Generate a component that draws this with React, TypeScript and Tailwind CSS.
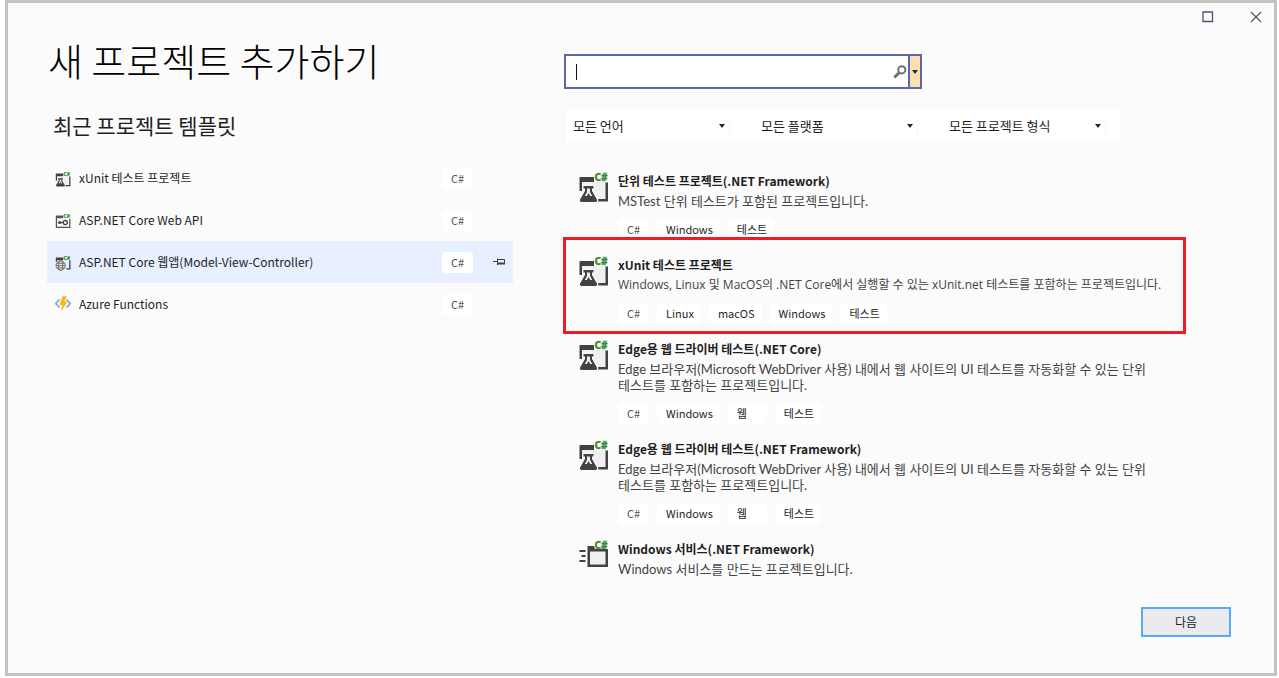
// React
import { Fragment, type ReactNode } from "react"

type Recent = {
  name: string
  icon: ReactNode
  active?: boolean
}

type Template = {
  title: string
  lines: string[]
  tags: string[]
  icon: ReactNode
  marked?: boolean
}

// Icons
function CSharp() {
  return (
    <text x="16.5" y="9" fontSize="10" fontWeight="800" fill="#388a34" stroke="#388a34" strokeWidth="0.3" fontFamily="Noto Sans, sans-serif">
      C#
    </text>
  )
}

function Flask() {
  return (
    <>
      <path
        d="M5.500 14h10v2.500H14V19l4.800 8.200c.9 1.600 0 2.800-1.600 2.800H3.800c-1.600 0-2.500-1.200-1.600-2.800L7 19v-2.500H5.500z"
        fill="#424242"
        stroke="#fbfbfb"
        strokeWidth="2.400"
        paintOrder="stroke"
      />
      <path d="M9 16.500h3v3.500l2.200 4H6.800L9 20z" fill="#f0eff1" />
      <path d="M8.500 24.500h4l-2-3.500z" fill="#424242" />
    </>
  )
}

function TestIcon({ className }: { className: string }) {
  return (
    <svg viewBox="0 -2 31 33" className={className} aria-hidden="true">
      <path d="M4 10h24v17H4z" fill="#f0eff1" />
      <path d="M1.500 5H16v5H4v9H1.500z" fill="#424242" />
      <path d="M27.500 10.500H30v19H19.500V27h8z" fill="#424242" />
      <Flask />
      <CSharp />
    </svg>
  )
}

function ServiceIcon({ className }: { className: string }) {
  return (
    <svg viewBox="0 -2 31 33" className={className} aria-hidden="true">
      <path d="M10 8h19v16H10z" fill="#f0eff1" />
      <path d="M9.500 6H16l1 3h13v18H9.500zM12 11.500v13h15.500v-13z" fill="#424242" fillRule="evenodd" />
      <path d="M1.500 10h6v2h-6zM3.500 15h4v2h-4zM1.500 20h6v2h-6z" fill="#424242" />
      <CSharp />
    </svg>
  )
}

function ApiIcon({ className }: { className: string }) {
  return (
    <svg viewBox="0 -2 31 33" className={className} aria-hidden="true">
      <path d="M1.500 5H16v5H4v16.500h23.500V11H30v18H1.500z" fill="#555" />
      <path d="M9 18.500h10" stroke="#424242" strokeWidth="2.500" />
      <circle cx="9" cy="18.500" r="3" fill="#424242" />
      <circle cx="20" cy="18.500" r="4" fill="#fff" stroke="#424242" strokeWidth="2.500" />
      <CSharp />
    </svg>
  )
}

function WebIcon({ className }: { className: string }) {
  return (
    <svg viewBox="0 -2 31 33" className={className} aria-hidden="true">
      <path d="M1.500 5H16v5H4v3H1.500zM27.500 10H30v18h-8v-2.500h5.500z" fill="#424242" />
      <g fill="#f0eff1" stroke="#666" strokeWidth="1.800">
        <circle cx="11" cy="20.500" r="9" />
        <ellipse cx="11" cy="20.500" rx="4" ry="9" />
        <path d="M2 20.500h18M3.500 16h15M3.500 25h15" />
      </g>
      <CSharp />
    </svg>
  )
}

function FunctionsIcon({ className }: { className: string }) {
  return (
    <svg viewBox="0 0 16 16" className={className} aria-hidden="true">
      <path d="M4.500 3.500.8 7.500l3.700 4M11.500 3.500l3.700 4-3.700 4" fill="none" stroke="#69b3dd" strokeWidth="1.700" />
      <path d="M7.500.3h4.300L9.300 5.500h3.200L6 15.500 7.200 9H4.300z" fill="#fcb813" />
    </svg>
  )
}

function PinIcon() {
  return (
    <svg viewBox="0 0 12 8" className="h-2 w-3" aria-hidden="true">
      <path d="M0 3.500h4M4.500.5v6.500M5 1.500h6.500v4H5" fill="none" stroke="#424242" />
      <path d="M5 4.500h7v2H5z" fill="#424242" />
    </svg>
  )
}

function Caret() {
  return (
    <svg viewBox="0 0 6 4" className="pointer-events-none h-1 w-1.5" aria-hidden="true">
      <path d="M0 0h6L3 4z" fill="#1e2a45" />
    </svg>
  )
}

// Data
const recents: Recent[] = [
  { name: "xUnit 테스트 프로젝트", icon: <TestIcon className="h-[17px] w-4" /> },
  { name: "ASP.NET Core Web API", icon: <ApiIcon className="h-[17px] w-4" /> },
  { name: "ASP.NET Core 웹앱(Model-View-Controller)", icon: <WebIcon className="h-[17px] w-4" />, active: true },
  { name: "Azure Functions", icon: <FunctionsIcon className="size-4" /> },
]

const filters = ["모든 언어", "모든 플랫폼", "모든 프로젝트 형식"]

const edgeLines = [
  "Edge 브라우저(Microsoft WebDriver 사용) 내에서 웹 사이트의 UI 테스트를 자동화할 수 있는 단위",
  "테스트를 포함하는 프로젝트입니다.",
]

const templates: Template[] = [
  {
    title: "단위 테스트 프로젝트(.NET Framework)",
    lines: ["MSTest 단위 테스트가 포함된 프로젝트입니다."],
    tags: ["C#", "Windows", "테스트"],
    icon: <TestIcon className="h-[33px] w-[31px]" />,
  },
  {
    title: "xUnit 테스트 프로젝트",
    lines: ["Windows, Linux 및 MacOS의 .NET Core에서 실행할 수 있는 xUnit.net 테스트를 포함하는 프로젝트입니다."],
    tags: ["C#", "Linux", "macOS", "Windows", "테스트"],
    icon: <TestIcon className="h-[33px] w-[31px]" />,
    marked: true,
  },
  {
    title: "Edge용 웹 드라이버 테스트(.NET Core)",
    lines: edgeLines,
    tags: ["C#", "Windows", "웹", "테스트"],
    icon: <TestIcon className="h-[33px] w-[31px]" />,
  },
  {
    title: "Edge용 웹 드라이버 테스트(.NET Framework)",
    lines: edgeLines,
    tags: ["C#", "Windows", "웹", "테스트"],
    icon: <TestIcon className="h-[33px] w-[31px]" />,
  },
  {
    title: "Windows 서비스(.NET Framework)",
    lines: ["Windows 서비스를 만드는 프로젝트입니다."],
    tags: [],
    icon: <ServiceIcon className="h-[33px] w-[31px]" />,
  },
]

function Tag({ label }: { label: string }) {
  return (
    <span
      className={`flex h-[21px] items-center rounded bg-white pr-[7px] pl-[9px] text-[11px] ${label === "C#" ? "min-w-[31px] text-[#555]" : "min-w-[39px] text-[#1e1e1e]"}`}
    >
      {label}
    </span>
  )
}

function RecentList() {
  return (
    <ul className="mt-[18px] mr-[51px] ml-[39px]">
      {recents.map((item) => (
        <li key={item.name} className={`flex h-[42px] items-center px-2 ${item.active ? "bg-[#e8effe]" : ""}`}>
          {item.icon}
          <span className="ml-2 grow text-xs whitespace-nowrap">{item.name}</span>
          <Tag label="C#" />
          <span className="ml-5 w-3">
            {item.active && (
              <button type="button" aria-label="고정" className="block">
                <PinIcon />
              </button>
            )}
          </span>
        </li>
      ))}
    </ul>
  )
}

function SearchBox() {
  return (
    <div className="flex h-[35px] w-[358px] border-2 border-[#5c69a5] bg-white">
      <div className="flex grow items-center pr-px pl-2.5">
        <span className="h-4 w-px bg-[#111]" />
        <input type="text" aria-label="템플릿 검색" className="min-w-0 grow bg-transparent text-sm caret-transparent outline-none" />
        <svg viewBox="0 0 14 14" className="size-3.5" aria-hidden="true">
          <circle cx="8.800" cy="4.800" r="3.600" fill="none" stroke="#717171" strokeWidth="2" />
          <path d="M6.300 7.500 1.300 12.500" stroke="#717171" strokeWidth="3" />
        </svg>
      </div>
      <button type="button" aria-label="검색 기록" className="flex w-3 items-center justify-center border-l-2 border-[#5c69a5] bg-[#fde0ae]">
        <Caret />
      </button>
    </div>
  )
}

function Filters() {
  return (
    <div className="mt-[21px] ml-0.5 flex h-8 w-[555px] items-center gap-6 bg-white">
      {filters.map((name) => (
        <div key={name} className="flex w-[164px] items-center border-r border-[#f6f6f6]">
          <select aria-label={name} className="-mr-3 grow appearance-none bg-transparent pl-[7px] text-[13px] outline-none">
            <option>{name}</option>
          </select>
          <span className="mr-1">
            <Caret />
          </span>
        </div>
      ))}
    </div>
  )
}

function TemplateList() {
  return (
    <ul className="mt-[30px] ml-3.5">
      {templates.map((item) => (
        <li key={item.title} className="relative mb-4 flex">
          <div className="-mt-0.5 w-10 shrink-0">{item.icon}</div>
          <div>
            <h3 className="text-xs leading-[18px] font-bold text-[#1e1e1e]">{item.title}</h3>
            <p
              className={`mt-[3px] leading-4 whitespace-nowrap text-[#444] ${item.marked ? "font-['Open_Sans','Noto_Sans_CJK_KR',sans-serif] text-xs" : "font-['Lato','Noto_Sans_CJK_KR',sans-serif] text-[13px]"}`}
            >
              {item.lines.map((line, key) => (
                <Fragment key={key}>
                  {key > 0 && <br />}
                  {line}
                </Fragment>
              ))}
            </p>
            {item.tags.length > 0 && (
              <div className="mt-2.5 flex gap-2">
                {item.tags.map((tag) => (
                  <Tag key={tag} label={tag} />
                ))}
              </div>
            )}
          </div>
          {item.marked && (
            <div className="pointer-events-none absolute -top-[19px] right-[88px] -bottom-2.5 -left-[15px] border-3 border-[#ed1c24]" />
          )}
        </li>
      ))}
    </ul>
  )
}

export default function App() {
  return (
    <div className="flex min-h-screen flex-col bg-white pr-0.5 pb-0.5 pl-[5px] font-['Noto_Sans_CJK_KR',sans-serif] text-[#1e1e1e]">
      <div className="flex grow flex-col border-3 border-[#c3c3c3] bg-[#fbfbfb]">
        <header className="flex h-7 items-center justify-end gap-[36px] pr-3 text-[#4a5568]">
          <button type="button" aria-label="최대화">
            <svg viewBox="0 0 12 12" className="size-3" aria-hidden="true">
              <path d="M1 1h9.500v9.500H1z" fill="none" stroke="currentColor" strokeWidth="1.300" />
            </svg>
          </button>
          <button type="button" aria-label="닫기">
            <svg viewBox="0 0 12 12" className="size-3" aria-hidden="true">
              <path d="m1 1 10 10M11 1 1 11" stroke="currentColor" strokeWidth="1.200" />
            </svg>
          </button>
        </header>

        <main className="grid grid-cols-[556fr_710fr]">
          <section>
            <h1 className="mt-0.5 ml-10 text-[38px] leading-[54px] font-light text-black">새 프로젝트 추가하기</h1>
            <h2 className="mt-6 ml-[45px] text-[21px] leading-7">최근 프로젝트 템플릿</h2>
            <RecentList />
          </section>
          <section className="pt-[23px]">
            <SearchBox />
            <Filters />
            <TemplateList />
          </section>
        </main>

        <footer className="mt-auto flex justify-end pr-[43px] pb-9">
          <button type="button" className="h-[30px] w-[90px] border-2 border-[#59a8fa] bg-[#ebeaef] text-xs">
            다음
          </button>
        </footer>
      </div>
    </div>
  )
}
